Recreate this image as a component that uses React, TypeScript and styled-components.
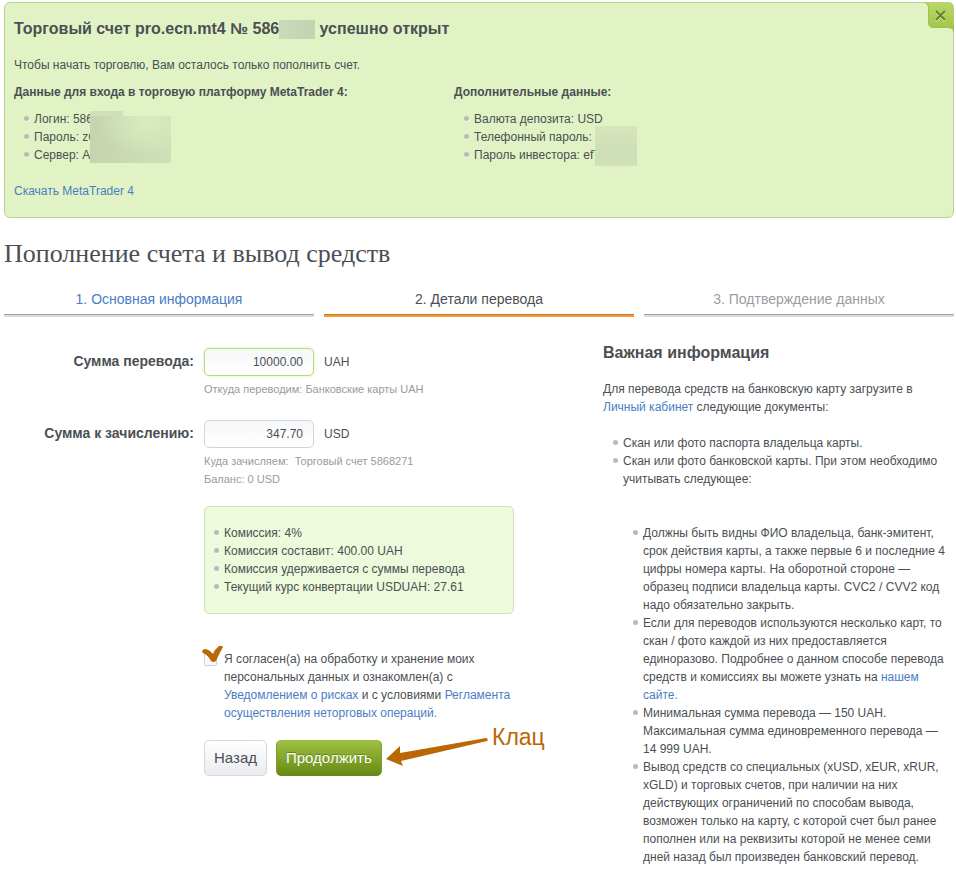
import React from 'react';
import styled, { createGlobalStyle, css } from 'styled-components';

const GlobalStyle = createGlobalStyle`
  *, *::before, *::after { box-sizing: border-box; }
  body {
    margin: 0;
    background: #fff;
    color: #4b4f54;
    font: 12px/18px "Liberation Sans", Arial, sans-serif;
  }
  h1, h2, h3, p, ul, ol { margin: 0; padding: 0; }
  button, input { font-family: inherit; color: inherit; }
`;

const Page = styled.div`
  padding: 2px 2px 6px 4px;
`;

const Link = styled.a`
  color: #4a7dc4;
  text-decoration: none;
  &:hover { text-decoration: underline; }
`;

const BulletList = styled.ul<{ $indent?: number }>`
  position: relative;
  list-style: none;
  padding-left: ${({ $indent = 10 }) => $indent}px;
`;

const Bullet = styled.li`
  padding-left: 10px;
  &::before {
    content: '';
    float: left;
    width: 5px;
    height: 5px;
    margin: 6px 0 0 -10px;
    border-radius: 50%;
    background: #b9bbba;
    box-shadow: 0 1px 0 rgba(255, 255, 255, 0.7);
  }
`;

const Banner = styled.section`
  position: relative;
  padding: 14px 9px 17px;
  border: 1px solid #b7d192;
  border-radius: 6px;
  background: #e1f3c5;
`;

const SectionTitle = styled.h2`
  font-size: 16px;
  line-height: 24px;
  font-weight: bold;
`;

const BannerText = styled.p`
  margin: 15px 0 9px;
`;

const BannerColumns = styled.div`
  display: grid;
  grid-template-columns: repeat(2, minmax(0, 440px));
  margin-bottom: 18px;
`;

const Subheading = styled.h3`
  margin-bottom: 9px;
  font-size: 12px;
  line-height: 18px;
`;

const MaskedNumber = styled.span`
  display: inline-block;
  width: 36px;
  height: 19px;
  vertical-align: middle;
  background: linear-gradient(90deg, #c9dab6, #c1d4b3);
`;

const Patch = styled.span<{ $left: number; $top: number; $width: number; $height: number; $fill: string }>`
  position: absolute;
  left: ${(p) => p.$left}px;
  top: ${(p) => p.$top}px;
  width: ${(p) => p.$width}px;
  height: ${(p) => p.$height}px;
  background: ${(p) => p.$fill};
`;

const CloseButton = styled.button`
  position: absolute;
  top: -1px;
  right: -1px;
  width: 30px;
  height: 30px;
  padding: 0;
  border: 0;
  background: none;
  cursor: pointer;
  svg { display: block; }
`;

const PageTitle = styled.h1`
  margin-top: 21px;
  font: 26px/30px Georgia, "Liberation Serif", serif;
`;

const Steps = styled.ol`
  display: grid;
  grid-template-columns: repeat(3, minmax(0, 1fr));
  gap: 10px;
  margin-top: 21px;
  list-style: none;
`;

const stepStyles = {
  done: css`color: #4a7dc4; --edge: #a2a4a5; --bar: #dcdcdc;`,
  active: css`color: #4b4f54; --edge: #d0781c; --bar: #f09a38;`,
  next: css`color: #9a9da0; --edge: #a2a4a5; --bar: #dcdcdc;`,
};

const Step = styled.li<{ $state: keyof typeof stepStyles }>`
  font-size: 14px;
  text-align: center;
  ${({ $state }) => stepStyles[$state]}
  &::after {
    content: '';
    display: block;
    height: 3px;
    margin-top: 6px;
    border-top: 1px solid var(--edge);
    background: var(--bar);
  }
`;

const Columns = styled.main`
  display: grid;
  grid-template-columns: minmax(0, 1fr) 351px;
  gap: 89px;
  margin-top: 24px;
`;

const Form = styled.form`
  display: grid;
  grid-template-columns: minmax(0, 190px) minmax(0, 310px);
  column-gap: 10px;
  align-content: start;
  padding-top: 7px;
`;

const FieldLabel = styled.label`
  font-size: 14px;
  line-height: 26px;
  font-weight: bold;
  text-align: right;
`;

const Field = styled.div`
  margin-bottom: 22px;
`;

const InputRow = styled.div`
  display: flex;
  align-items: center;
  gap: 10px;
  margin-bottom: 4px;
`;

const AmountInput = styled.input<{ $highlight?: boolean }>`
  width: 110px;
  height: 28px;
  padding: 0 10px;
  border: 1px solid ${(p) => (p.$highlight ? '#b5dc84' : '#d3d6da')};
  border-radius: 5px;
  background: linear-gradient(#f6f7f9, #fff);
  box-shadow: ${(p) => (p.$highlight ? '0 0 3px #d3f0ad' : 'none')};
  font-size: 12px;
  text-align: right;
`;

const Hint = styled.p`
  color: #999b9d;
  font-size: 11px;
`;

const FormBody = styled.div`
  grid-column: 2;
`;

const FeeBox = styled.div`
  margin: -4px 0 36px;
  padding: 17px 0;
  border: 1px solid #cfe0bd;
  border-radius: 5px;
  background: #edfadb;
`;

const Agreement = styled.div`
  position: relative;
  display: flex;
  gap: 7px;
`;

const Checkbox = styled.input`
  flex: none;
  appearance: none;
  width: 13px;
  height: 13px;
  margin: 3px 0 0;
  border: 1px solid #d0d2d5;
  border-radius: 2px;
  background: #fafafa;
`;

const Tick = styled.svg`
  position: absolute;
  left: -2px;
  top: -4px;
  pointer-events: none;
`;

const Actions = styled.div`
  position: relative;
  display: flex;
  gap: 9px;
  margin-top: 18px;
`;

const Button = styled.button<{ $primary?: boolean }>`
  height: 36px;
  padding: 0 9px 2px;
  border: 1px solid #d5d7da;
  border-radius: 5px;
  background: linear-gradient(#fff, #e9ebee);
  font-size: 15px;
  white-space: nowrap;
  cursor: pointer;
  ${(p) => p.$primary && css`
    border-color: #7c9f2c;
    border-top-color: #98ba45;
    border-bottom-color: #678819;
    background: linear-gradient(#9dc042, #678a14);
    color: #fff;
    text-shadow: 0 -1px 0 rgba(60, 90, 0, 0.5);
  `}
`;

const Callout = styled.div`
  position: absolute;
  left: 182px;
  top: -18px;
  display: flex;
  gap: 4px;
  color: #b96805;
  font-size: 23px;
  line-height: 30px;
  pointer-events: none;
`;

const Info = styled.aside`
  p { margin: 15px 0 18px; }
`;

const NestedRules = styled(BulletList)`
  margin-top: 36px;
`;

function CloseIcon() {
  return (
    <svg width="30" height="30" viewBox="0 0 30 30" aria-hidden="true">
      <defs>
        <linearGradient id="closeFill" x1="0" y1="0" x2="0" y2="1">
          <stop offset="0" stopColor="#b9d867" />
          <stop offset="1" stopColor="#9fc348" />
        </linearGradient>
      </defs>
      <path d="M0 0H24Q30 0 30 6V30Q29 26 25 26H10Q4 26 4 20V5Q4 1 0 0Z" fill="url(#closeFill)" />
      <path d="M0.5 0.5Q4.5 1 4.5 5V20Q4.5 25.5 10 25.5H25Q29.5 26 29.5 30" fill="none" stroke="#a0c350" />
      <path d="M12 10L21 19M21 10L12 19" stroke="#d8edaa" strokeWidth="2" />
      <path d="M12 9L21 18M21 9L12 18" stroke="#68802e" strokeWidth="2" />
    </svg>
  );
}

export default function App() {
  return (
    <>
      <GlobalStyle />
      <Page>
        <Banner>
          <CloseButton type="button" aria-label="Закрыть"><CloseIcon /></CloseButton>
          <SectionTitle>
            Торговый счет pro.ecn.mt4 № 586<MaskedNumber /> успешно открыт
          </SectionTitle>
          <BannerText>Чтобы начать торговлю, Вам осталось только пополнить счет.</BannerText>
          <BannerColumns>
            <div>
              <Subheading>Данные для входа в торговую платформу MetaTrader 4:</Subheading>
              <BulletList>
                <Bullet>Логин: 586</Bullet>
                <Bullet>Пароль: zC</Bullet>
                <Bullet>Сервер: A</Bullet>
                <Patch $left={76} $top={1} $width={33} $height={12} $fill="#d0dfb8" />
                <Patch
                  $left={76} $top={6} $width={81} $height={47}
                  $fill="radial-gradient(ellipse at 70% 15%, #dbebbf, rgba(219, 235, 191, 0) 60%), linear-gradient(90deg, #c5d4ae, #cfdfb8)"
                />
              </BulletList>
            </div>
            <div>
              <Subheading>Дополнительные данные:</Subheading>
              <BulletList>
                <Bullet>Валюта депозита: USD</Bullet>
                <Bullet>Телефонный пароль:</Bullet>
                <Bullet>Пароль инвестора: ef7</Bullet>
                <Patch $left={141} $top={16} $width={42} $height={40} $fill="linear-gradient(#d6e5bc, #cedeb6 60%, #d2e1b8)" />
              </BulletList>
            </div>
          </BannerColumns>
          <Link href="#download">Скачать MetaTrader 4</Link>
        </Banner>

        <PageTitle>Пополнение счета и вывод средств</PageTitle>

        <Steps>
          <Step $state="done"><Link href="#step-1">1. Основная информация</Link></Step>
          <Step $state="active">2. Детали перевода</Step>
          <Step $state="next">3. Подтверждение данных</Step>
        </Steps>

        <Columns>
          <Form onSubmit={(e) => e.preventDefault()}>
            <FieldLabel htmlFor="amount">Сумма перевода:</FieldLabel>
            <Field>
              <InputRow>
                <AmountInput id="amount" defaultValue="10000.00" $highlight />
                <span>UAH</span>
              </InputRow>
              <Hint>Откуда переводим: Банковские карты UAH</Hint>
            </Field>

            <FieldLabel htmlFor="credited">Сумма к зачислению:</FieldLabel>
            <Field>
              <InputRow>
                <AmountInput id="credited" defaultValue="347.70" />
                <span>USD</span>
              </InputRow>
              <Hint>Куда зачисляем:&nbsp; Торговый счет 5868271</Hint>
              <Hint>Баланс: 0 USD</Hint>
            </Field>

            <FormBody>
              <FeeBox>
                <BulletList $indent={9}>
                  <Bullet>Комиссия: 4%</Bullet>
                  <Bullet>Комиссия составит: 400.00 UAH</Bullet>
                  <Bullet>Комиссия удерживается с суммы перевода</Bullet>
                  <Bullet>Текущий курс конвертации USDUAH: 27.61</Bullet>
                </BulletList>
              </FeeBox>

              <Agreement>
                <Checkbox id="agree" type="checkbox" defaultChecked />
                <Tick width="22" height="20" viewBox="0 0 22 20" aria-hidden="true">
                  <path d="M0 5Q1 3 4 3Q8 4 11 8Q13 3 17 0Q20 -1 21 1Q17 8 14 15Q11 17 9 15Q6 9 1 7Q0 6 0 5Z" fill="#b96805" />
                </Tick>
                <label htmlFor="agree">
                  Я согласен(а) на обработку и хранение моих персональных данных и ознакомлен(а) с{' '}
                  <Link href="#risks">Уведомлением о рисках</Link> и с условиями{' '}
                  <Link href="#rules">Регламента осуществления неторговых операций.</Link>
                </label>
              </Agreement>

              <Actions>
                <Button type="button">Назад</Button>
                <Button type="submit" $primary>Продолжить</Button>
                <Callout>
                  <svg width="102" height="48" viewBox="0 0 102 48" aria-hidden="true">
                    <path d="M0 37L14 24V31L100 16Q103 17 101 19L15 39L17 44Z" fill="#b96805" />
                  </svg>
                  <span>Клац</span>
                </Callout>
              </Actions>
            </FormBody>
          </Form>

          <Info>
            <SectionTitle>Важная информация</SectionTitle>
            <p>
              Для перевода средств на банковскую карту загрузите в{' '}
              <Link href="#account">Личный кабинет</Link> следующие документы:
            </p>
            <BulletList>
              <Bullet>Скан или фото паспорта владельца карты.</Bullet>
              <Bullet>
                Скан или фото банковской карты. При этом необходимо учитывать следующее:
                <NestedRules>
                  <Bullet>
                    Должны быть видны ФИО владельца, банк-эмитент, срок действия карты, а также первые 6 и
                    последние 4 цифры номера карты. На оборотной стороне — образец подписи владельца карты.
                    CVC2 / CVV2 код надо обязательно закрыть.
                  </Bullet>
                  <Bullet>
                    Если для переводов используются несколько карт, то скан / фото каждой из них
                    предоставляется единоразово. Подробнее о данном способе перевода средств и комиссиях вы
                    можете узнать на <Link href="#site">нашем сайте.</Link>
                  </Bullet>
                  <Bullet>
                    Минимальная сумма перевода — 150 UAH. Максимальная сумма единовременного перевода —
                    14&nbsp;999&nbsp;UAH.
                  </Bullet>
                  <Bullet>
                    Вывод средств со специальных (xUSD, xEUR, xRUR, xGLD) и торговых счетов, при наличии на
                    них действующих ограничений по способам вывода, возможен только на карту, с которой счет
                    был ранее пополнен или на реквизиты которой не менее семи дней назад был произведен
                    банковский перевод.
                  </Bullet>
                </NestedRules>
              </Bullet>
            </BulletList>
          </Info>
        </Columns>
      </Page>
    </>
  );
}
